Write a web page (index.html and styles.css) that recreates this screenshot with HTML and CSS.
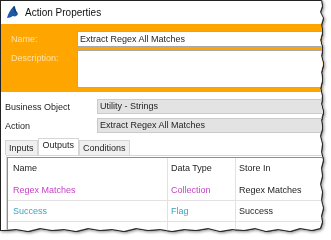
FILE: index.html
```html
<!DOCTYPE html>
<html lang="en">
<head>
<meta charset="UTF-8" />
<title>Action Properties</title>
<link rel="stylesheet" href="styles.css">
</head>
<body>
<div class="shot">
  <div class="window">
    <div class="titlebar">
      <svg class="logo" width="11" height="13" viewBox="0 0 11 13">
        <path d="M0 12 C1 8 3 4 6 1 C7 0 8 0 8 1 C8 3 9 5 11 8 C10 10 8 11 6 10 C4 11 2 12 0 12 Z" fill="#1d5aa6"/>
        <path d="M6 1 C7 0 8 0 8 1 C8 3 9 5 11 8 C9 7 7 6 6 1 Z" fill="#123c78"/>
      </svg>
      <span>Action Properties</span>
    </div>

    <div class="header-panel">
      <label>Name:</label>
      <div class="field">Extract Regex All Matches</div>
      <label>Description:</label>
      <div class="field desc"></div>
    </div>

    <div class="props">
      <div class="prop-row">
        <span class="prop-label">Business Object</span>
        <div class="combo">Utility - Strings</div>
      </div>
      <div class="prop-row">
        <span class="prop-label">Action</span>
        <div class="combo">Extract Regex All Matches</div>
      </div>
    </div>

    <div class="tabs">
      <div class="tab">Inputs</div>
      <div class="tab active">Outputs</div>
      <div class="tab">Conditions</div>
    </div>

    <div class="tab-panel">
      <div class="grid">
        <div class="grid-row head">
          <div class="c1">Name</div>
          <div class="c2">Data Type</div>
          <div class="c3">Store In</div>
        </div>
        <div class="grid-row">
          <div class="c1 coll">Regex Matches</div>
          <div class="c2 coll">Collection</div>
          <div class="c3">Regex Matches</div>
        </div>
        <div class="grid-row">
          <div class="c1 flag">Success</div>
          <div class="c2 flag">Flag</div>
          <div class="c3">Success</div>
        </div>
        <div class="grid-row">
          <div class="c1"></div>
          <div class="c2"></div>
          <div class="c3"></div>
        </div>
      </div>
    </div>
  </div>
</div>
</body>
</html>
```

FILE: styles.css
```css
body {
  margin: 0;
  background: #fff;
  font-family: "Liberation Sans", Arial, sans-serif;
  font-size: 9px;
  color: #1e1e1e;
}
.shot {
  width: 331px;
  height: 240px;
  filter: drop-shadow(1px 0 0 #2a2a2a) drop-shadow(0 1px 0 #2a2a2a) drop-shadow(1px 1px 1.5px rgba(0,0,0,.45));
}
.window {
  width: 330px;
  height: 236px;
  box-sizing: border-box;
  background: #fff;
  border-top: 1px solid #222;
  border-left: 1px solid #222;
  overflow: hidden;
  clip-path: polygon(0 0, 321px 0, 322px 6px, 320px 12px, 323px 18px, 321px 25px, 322px 32px, 320px 40px, 322px 48px, 321px 56px, 323px 64px, 321px 72px, 322px 80px, 320px 88px, 322px 96px, 321px 104px, 323px 112px, 321px 120px, 322px 128px, 320px 136px, 322px 144px, 321px 152px, 323px 160px, 321px 168px, 322px 176px, 320px 184px, 322px 192px, 321px 200px, 323px 208px, 321px 216px, 322px 222px, 320px 228px, 312px 230px, 300px 228px, 290px 231px, 278px 229px, 266px 231px, 255px 228px, 244px 230px, 232px 229px, 220px 231px, 208px 228px, 196px 230px, 184px 229px, 172px 231px, 160px 229px, 148px 230px, 136px 228px, 124px 231px, 112px 229px, 100px 230px, 88px 228px, 76px 231px, 64px 229px, 52px 230px, 40px 228px, 28px 231px, 16px 229px, 4px 230px, 0 230px);
}
.titlebar {
  height: 23px;
  display: flex;
  align-items: center;
  padding-left: 6px;
  font-size: 10px;
  color: #111;
}
.logo {
  margin-right: 7px;
}
.header-panel {
  background: #ffa500;
  display: grid;
  grid-template-columns: 66px 1fr;
  row-gap: 3px;
  padding: 7px 0 4px 10px;
  width: 340px;
}
.header-panel label {
  color: #fde2ad;
  font-size: 9px;
  line-height: 16px;
}
.field {
  height: 16px;
  box-sizing: border-box;
  background: #fff;
  border: 1px solid #a8a8a8;
  padding: 0 2px;
  line-height: 14px;
}
.field.desc {
  height: 38px;
}
.props {
  padding: 7px 0 0 4px;
  display: flex;
  flex-direction: column;
  gap: 4px;
}
.prop-row {
  display: flex;
  align-items: center;
}
.prop-label {
  width: 92px;
}
.combo {
  flex: 1;
  height: 15px;
  box-sizing: border-box;
  background: #e3e3e3;
  border: 1px solid #cacaca;
  padding: 0 2px;
  line-height: 13px;
  margin-right: -20px;
}
.tabs {
  display: flex;
  align-items: flex-end;
  margin: 5px 0 0 4px;
  height: 17px;
}
.tab {
  height: 15px;
  box-sizing: border-box;
  border: 1px solid #d6d6d6;
  border-bottom: none;
  background: #f0f0f0;
  padding: 0 3px;
  line-height: 14px;
}
.tab.active {
  height: 17px;
  background: #fff;
  padding: 0 4px;
  line-height: 13px;
}
.tab-panel {
  margin-left: 5px;
  border-top: 1px solid #d6d6d6;
  border-left: 1px solid #d6d6d6;
  padding: 1px 0 0 0;
}
.grid {
  border-top: 1px solid #8a8f96;
  border-left: 1px solid #8a8f96;
}
.grid-row {
  display: grid;
  grid-template-columns: 160px 68px 100px;
  height: 21px;
  border-bottom: 1px solid #e2e2e2;
  box-sizing: border-box;
}
.grid-row.head {
  height: 22px;
  border-bottom: none;
}
.grid-row > div {
  line-height: 21px;
  padding-left: 3px;
  border-right: 1px solid #e2e2e2;
  white-space: nowrap;
}
.grid-row > .c1 {
  padding-left: 5px;
}
.coll {
  color: #c543c5;
}
.flag {
  color: #3ea3bd;
}
```
